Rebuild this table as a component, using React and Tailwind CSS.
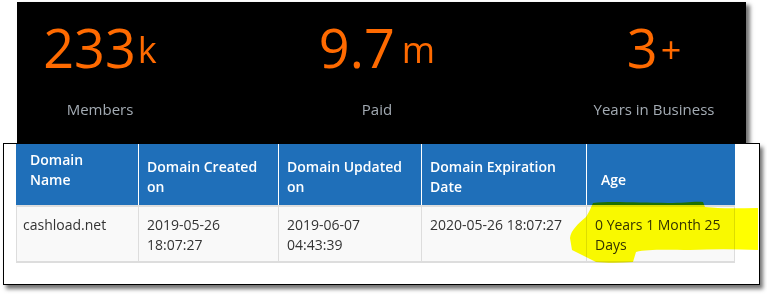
import React from "react";

const stats = [
  { num: "233", suf: "k", label: "Members", gap: "ml-[2px]" },
  { num: "9.7", suf: "m", label: "Paid", gap: "ml-[7px]" },
  { num: "3", suf: "+", label: "Years in Business", gap: "ml-[3px]" },
];

export default function App() {
  return (
    <div
      className="relative w-[767px] h-[294px] overflow-hidden bg-white pt-[2px]"
      style={{ fontFamily: '"Open Sans", "Liberation Sans", sans-serif' }}
    >
      <div className="ml-[17px] w-[729px] h-[141px] bg-black shadow-[4px_3px_4px_rgba(0,0,0,0.55)] flex justify-between pl-[3px] pr-[12px] pt-[18px]">
        {stats.map((s) => (
          <div key={s.label} className="w-[160px] flex flex-col items-center">
            <div className="text-[54px] leading-[54px] text-[#ff6a00] whitespace-nowrap text-center">
              <span>{s.num}</span>
              <span className={"inline-block text-[36px] leading-none font-normal align-[5px] " + s.gap}>{s.suf}</span>
            </div>
            <div className="mt-[25px] text-[15px] leading-[20px] text-[#a3abb3] whitespace-nowrap">
              {s.label}
            </div>
          </div>
        ))}
      </div>

      <div className="relative z-10 ml-[3px] w-[757px] h-[142px] border border-black bg-white shadow-[3px_4px_4px_rgba(0,0,0,0.55)] pl-[12px]">
        <div className="grid grid-cols-[122px_140px_143px_165px_149px] w-[719px]">
          <div className="h-[61px] bg-[#1f6fb9] text-white text-[14px] leading-[20px] font-semibold pl-[14px] pt-[6px]">
            Domain<br />Name
          </div>
          <div className="h-[61px] bg-[#1f6fb9] text-white text-[14px] leading-[20px] font-semibold border-l border-white pl-[8px] pt-[13px]">
            Domain Created<br />on
          </div>
          <div className="h-[61px] bg-[#1f6fb9] text-white text-[14px] leading-[20px] font-semibold border-l border-white pl-[8px] pt-[13px]">
            Domain Updated<br />on
          </div>
          <div className="h-[61px] bg-[#1f6fb9] text-white text-[14px] leading-[20px] font-semibold border-l border-white pl-[8px] pt-[13px]">
            Domain Expiration<br />Date
          </div>
          <div className="h-[61px] bg-[#1f6fb9] text-white text-[14px] leading-[20px] font-semibold border-l border-white pl-[14px] pt-[26px]">
            Age
          </div>

          <div className="h-[58px] bg-[#f9f9f9] text-[#333] text-[14px] leading-[20px] border-t-2 border-b-2 border-l border-[#dddddd] pl-[6px] pt-[8px]">
            cashload.net
          </div>
          <div className="h-[58px] bg-[#f9f9f9] text-[#333] text-[14px] leading-[20px] border-t-2 border-b-2 border-l border-[#dddddd] pl-[8px] pr-[8px] pt-[8px]">
            2019-05-26 18:07:27
          </div>
          <div className="h-[58px] bg-[#f9f9f9] text-[#333] text-[14px] leading-[20px] border-t-2 border-b-2 border-l border-[#dddddd] pl-[8px] pr-[8px] pt-[8px]">
            2019-06-07 04:43:39
          </div>
          <div className="h-[58px] bg-[#f9f9f9] text-[#333] text-[14px] leading-[20px] border-t-2 border-b-2 border-l border-[#dddddd] pl-[8px] pr-[8px] pt-[8px]">
            2020-05-26 18:07:27
          </div>
          <div className="h-[58px] bg-[#f9f9f9] text-[#333] text-[14px] leading-[20px] border-t-2 border-b-2 border-l border-r border-[#dddddd] pl-[8px] pr-[8px] pt-[8px]">
            0 Years 1 Month 25 Days
          </div>
        </div>
      </div>

      <svg
        className="absolute left-0 top-0 z-20 pointer-events-none mix-blend-multiply"
        width="767"
        height="294"
        viewBox="0 0 767 294"
      >
        <path
          d="M593 203 C610 201 640 203 668 203 C684 203 695 201 703 202 L705 207 C722 209 740 208 758 208 L758 250 C735 249 712 249 690 250 C668 250 648 249 636 252 L633 262 C620 263 606 263 596 262 C588 258 580 254 572 250 L570 238 C571 230 578 224 586 217 C590 211 591 207 593 203 Z"
          fill="#ffff00"
        />
      </svg>
    </div>
  );
}
